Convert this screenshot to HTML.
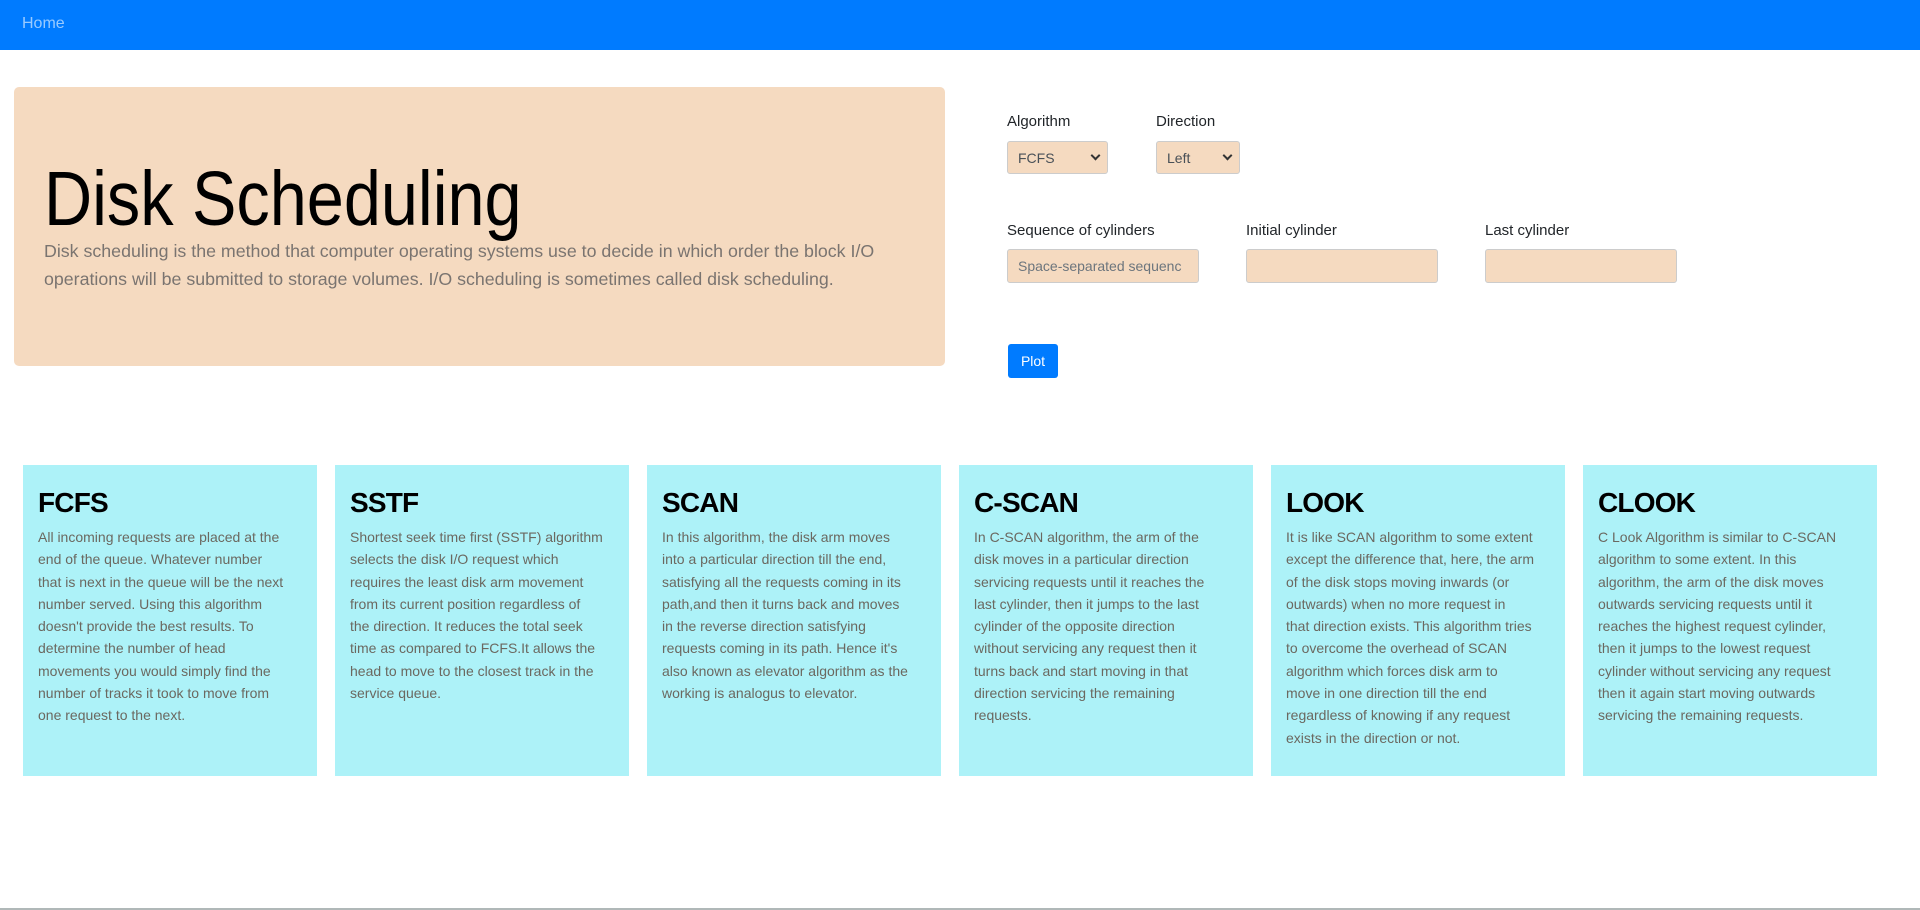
<!DOCTYPE html>
<html><head><meta charset="utf-8"><style>
*{box-sizing:border-box;margin:0;padding:0}
html,body{width:1920px;height:910px;overflow:hidden;background:#fff;font-family:"Liberation Sans",sans-serif;position:relative}
.nav{position:absolute;left:0;top:0;width:1920px;height:50px;background:#007bff}
.nav span{position:absolute;left:22px;top:15px;font-size:16px;color:rgba(255,255,255,.6)}
.jumbo{position:absolute;left:14px;top:87px;width:931px;height:279px;background:#f5dac0;border-radius:5px}
.title{position:absolute;left:44px;top:157px;font-size:77px;font-weight:300;color:#000;white-space:nowrap;transform:scaleX(.865);transform-origin:left top;line-height:1.1}
.lead{position:absolute;left:44px;top:237px;font-size:17.8px;line-height:28px;color:#7a7470;white-space:nowrap}
.lbl{position:absolute;font-size:15px;color:#212529;white-space:nowrap}
.box{position:absolute;background:#f5dac0;border:1px solid #ccc;border-radius:3px;font-size:14px;color:#495057}
.box span{position:absolute;left:10px;top:8px;white-space:nowrap}
.chev{position:absolute;right:8px;top:10px;width:7px;height:7px;border-right:2px solid #333;border-bottom:2px solid #333;transform:rotate(45deg)}
.btn{position:absolute;left:1008px;top:344px;width:50px;height:34px;background:#007bff;border-radius:3px;color:#fff;font-size:14px;text-align:center;line-height:34px}
.card{position:absolute;top:465px;width:294px;height:311px;background:#adf2f8;padding:0 15px}
.card h2{margin-top:20px;font-size:28px;font-weight:bold;color:#000;line-height:36px;letter-spacing:-0.8px}
.card p{margin-top:5px;font-size:14px;line-height:22.3px;color:#6b6860;white-space:nowrap}
.foot{position:absolute;left:0;top:908px;width:1920px;height:2px;background:#b0b8b8}
</style></head><body>
<div class="nav"><span>Home</span></div>
<div class="jumbo"></div>
<div class="title">Disk Scheduling</div>
<div class="lead">Disk scheduling is the method that computer operating systems use to decide in which order the block I/O<br>operations will be submitted to storage volumes. I/O scheduling is sometimes called disk scheduling.</div>

<div class="lbl" style="left:1007px;top:113px">Algorithm</div>
<div class="lbl" style="left:1156px;top:113px">Direction</div>
<div class="box" style="left:1007px;top:141px;width:101px;height:33px"><span>FCFS</span><div class="chev"></div></div>
<div class="box" style="left:1156px;top:141px;width:84px;height:33px"><span>Left</span><div class="chev"></div></div>

<div class="lbl" style="left:1007px;top:222px">Sequence of cylinders</div>
<div class="lbl" style="left:1246px;top:222px">Initial cylinder</div>
<div class="lbl" style="left:1485px;top:222px">Last cylinder</div>
<div class="box" style="left:1007px;top:249px;width:192px;height:34px;overflow:hidden"><span style="color:#6c757d">Space-separated sequenc</span></div>
<div class="box" style="left:1246px;top:249px;width:192px;height:34px"></div>
<div class="box" style="left:1485px;top:249px;width:192px;height:34px"></div>
<div class="btn">Plot</div>

<div class="card" style="left:23px"><h2>FCFS</h2><p>All incoming requests are placed at the<br>end of the queue. Whatever number<br>that is next in the queue will be the next<br>number served. Using this algorithm<br>doesn't provide the best results. To<br>determine the number of head<br>movements you would simply find the<br>number of tracks it took to move from<br>one request to the next.</p></div>
<div class="card" style="left:335px"><h2>SSTF</h2><p>Shortest seek time first (SSTF) algorithm<br>selects the disk I/O request which<br>requires the least disk arm movement<br>from its current position regardless of<br>the direction. It reduces the total seek<br>time as compared to FCFS.It allows the<br>head to move to the closest track in the<br>service queue.</p></div>
<div class="card" style="left:647px"><h2>SCAN</h2><p>In this algorithm, the disk arm moves<br>into a particular direction till the end,<br>satisfying all the requests coming in its<br>path,and then it turns back and moves<br>in the reverse direction satisfying<br>requests coming in its path. Hence it's<br>also known as elevator algorithm as the<br>working is analogus to elevator.</p></div>
<div class="card" style="left:959px"><h2>C-SCAN</h2><p>In C-SCAN algorithm, the arm of the<br>disk moves in a particular direction<br>servicing requests until it reaches the<br>last cylinder, then it jumps to the last<br>cylinder of the opposite direction<br>without servicing any request then it<br>turns back and start moving in that<br>direction servicing the remaining<br>requests.</p></div>
<div class="card" style="left:1271px"><h2>LOOK</h2><p>It is like SCAN algorithm to some extent<br>except the difference that, here, the arm<br>of the disk stops moving inwards (or<br>outwards) when no more request in<br>that direction exists. This algorithm tries<br>to overcome the overhead of SCAN<br>algorithm which forces disk arm to<br>move in one direction till the end<br>regardless of knowing if any request<br>exists in the direction or not.</p></div>
<div class="card" style="left:1583px"><h2>CLOOK</h2><p>C Look Algorithm is similar to C-SCAN<br>algorithm to some extent. In this<br>algorithm, the arm of the disk moves<br>outwards servicing requests until it<br>reaches the highest request cylinder,<br>then it jumps to the lowest request<br>cylinder without servicing any request<br>then it again start moving outwards<br>servicing the remaining requests.</p></div>
<div class="foot"></div>
</body></html>
